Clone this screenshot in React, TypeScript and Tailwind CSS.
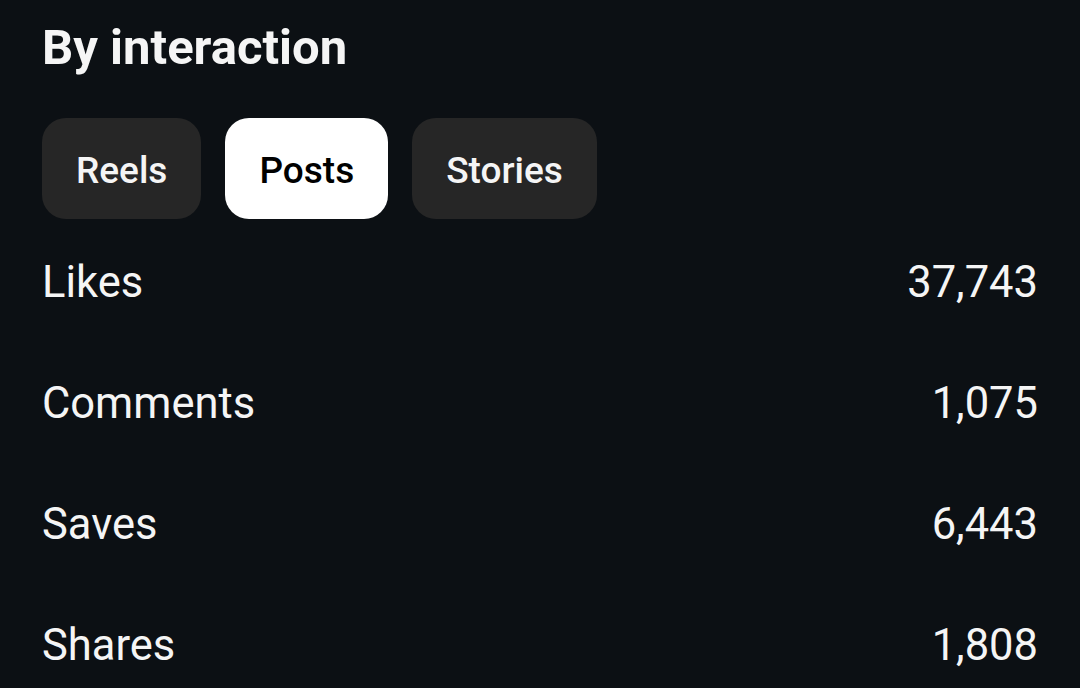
import React from "react";

const rows = [
  { label: "Likes", value: "37,743" },
  { label: "Comments", value: "1,075" },
  { label: "Saves", value: "6,443" },
  { label: "Shares", value: "1,808" },
];

const tabs = [
  { label: "Reels", active: false },
  { label: "Posts", active: true },
  { label: "Stories", active: false },
];

export default function App() {
  return (
    <div
      className="w-[1080px] h-[688px] overflow-hidden bg-[#0c1014] text-[#f5f5f5] px-[42px]"
      style={{ fontFamily: "Roboto, 'Noto Sans', sans-serif" }}
    >
      <div className="h-[94px] flex items-center">
        <h1 className="text-[49px] font-bold leading-none">By interaction</h1>
      </div>
      <div className="mt-[24px] flex gap-[24px]">
        {tabs.map((t) => (
          <div
            key={t.label}
            className={
              t.active
                ? "h-[101px] pt-[3px] px-[34px] rounded-[24px] bg-white text-black flex items-center text-[37px] font-medium leading-none"
                : "h-[101px] pt-[3px] px-[34px] rounded-[24px] bg-[#262626] text-[#f5f5f5] flex items-center text-[37px] font-medium leading-none"
            }
          >
            {t.label}
          </div>
        ))}
      </div>
      <div className="mt-[3px] flex flex-col">
        {rows.map((r) => (
          <div key={r.label} className="h-[121px] flex items-center justify-between text-[43.5px] leading-none">
            <span>{r.label}</span>
            <span>{r.value}</span>
          </div>
        ))}
      </div>
    </div>
  );
}
